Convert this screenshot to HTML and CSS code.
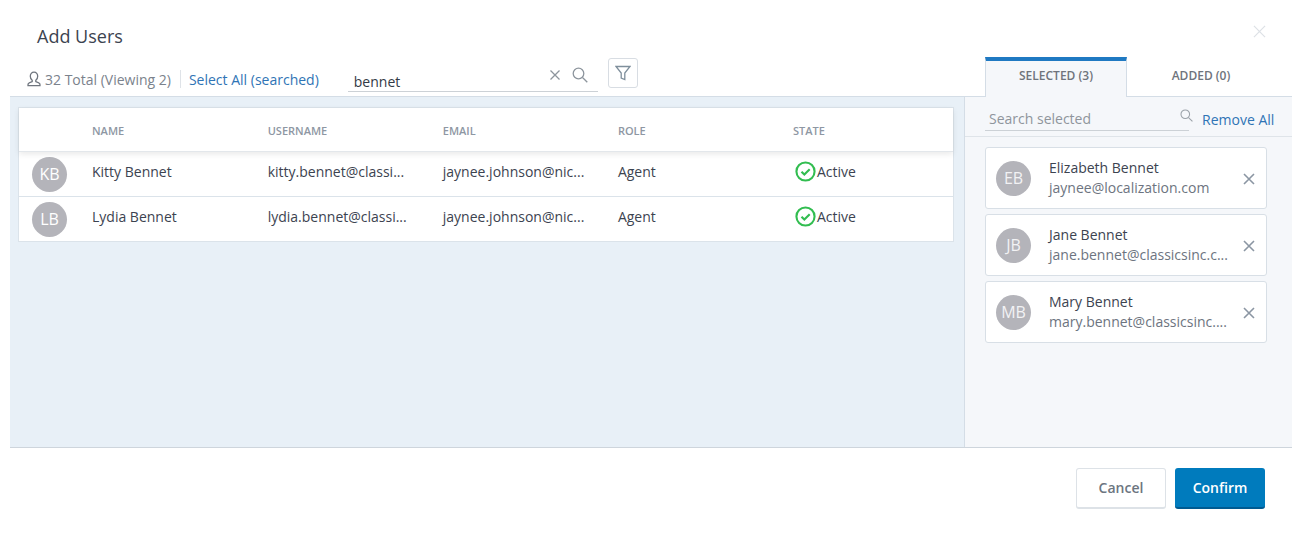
FILE: index.html
```html
<!DOCTYPE html>
<html lang="en">
<head>
<meta charset="utf-8">
<title>Add Users</title>
<link rel="stylesheet" href="styles.css">
</head>
<body>
<div class="dialog">
  <svg class="close" viewBox="0 0 14 14"><path d="M1 1l12 12M13 1L1 13"/></svg>
  <header class="head">
    <div class="head-left">
      <h1 class="title">Add Users</h1>
      <div class="toolbar">
        <svg class="user-ico" viewBox="0 0 14 16"><path d="M7 1.200c-2.300 0-3.700 1.700-3.700 4 0 1.800.8 3.300 1.900 4.100v1.300c-1.700.5-3.600 1.200-4 2.100-.2.600-.2 1.300-.2 2h12c0-.7 0-1.400-.2-2-.4-.9-2.300-1.600-4-2.100V9.300c1.100-.8 1.900-2.300 1.900-4.100 0-2.300-1.400-4-3.700-4z"/></svg>
        <span class="total">32 Total (Viewing 2)</span>
        <span class="sep"></span>
        <a class="link">Select All (searched)</a>
        <div class="search">
          <span class="search-val">bennet</span>
          <svg class="clear-ico" viewBox="0 0 12 12"><path d="M1.500 1.500l9 9M10.500 1.500l-9 9"/></svg>
          <svg class="search-ico" viewBox="0 0 16 16"><circle cx="6.500" cy="6.500" r="5.300"/><path d="M10.500 10.500l4.800 4.800"/></svg>
        </div>
        <button class="filter"><svg viewBox="0 0 16 16"><path d="M1 1.500h14L9.800 8v6.500l-3.600-1.500V8z"/></svg></button>
      </div>
    </div>
    <div class="tabs">
      <div class="tab tab-on">SELECTED (3)</div>
      <div class="tab">ADDED (0)</div>
    </div>
  </header>
  <main class="body">
    <section class="left">
      <div class="table">
        <div class="row row-head">
          <span></span><span>NAME</span><span>USERNAME</span><span>EMAIL</span><span>ROLE</span><span>STATE</span>
        </div>
        <div class="row">
          <span class="avatar">KB</span><span class="cell">Kitty Bennet</span><span class="cell">kitty.bennet@classi...</span><span class="cell">jaynee.johnson@nic...</span><span class="cell">Agent</span>
          <span class="cell state"><svg viewBox="0 0 22 22"><circle cx="11" cy="11" r="9.500"/><path d="M6.800 11.200l3 3 5.600-5.600"/></svg>Active</span>
        </div>
        <div class="row">
          <span class="avatar">LB</span><span class="cell">Lydia Bennet</span><span class="cell">lydia.bennet@classi...</span><span class="cell">jaynee.johnson@nic...</span><span class="cell">Agent</span>
          <span class="cell state"><svg viewBox="0 0 22 22"><circle cx="11" cy="11" r="9.500"/><path d="M6.800 11.200l3 3 5.600-5.600"/></svg>Active</span>
        </div>
      </div>
    </section>
    <aside class="right">
      <div class="right-top">
        <div class="sel-search">
          <span class="placeholder">Search selected</span>
          <svg viewBox="0 0 16 16"><circle cx="6.500" cy="6.500" r="5.300"/><path d="M10.500 10.500l4.800 4.800"/></svg>
        </div>
        <a class="link">Remove All</a>
      </div>
      <div class="cards">
        <div class="card">
          <span class="avatar">EB</span>
          <div class="card-text"><div class="card-name">Elizabeth Bennet</div><div class="card-mail">jaynee@localization.com</div></div>
          <svg class="card-x" viewBox="0 0 12 12"><path d="M1 1l10 10M11 1L1 11"/></svg>
        </div>
        <div class="card">
          <span class="avatar">JB</span>
          <div class="card-text"><div class="card-name">Jane Bennet</div><div class="card-mail">jane.bennet@classicsinc.c...</div></div>
          <svg class="card-x" viewBox="0 0 12 12"><path d="M1 1l10 10M11 1L1 11"/></svg>
        </div>
        <div class="card">
          <span class="avatar">MB</span>
          <div class="card-text"><div class="card-name">Mary Bennet</div><div class="card-mail">mary.bennet@classicsinc....</div></div>
          <svg class="card-x" viewBox="0 0 12 12"><path d="M1 1l10 10M11 1L1 11"/></svg>
        </div>
      </div>
    </aside>
  </main>
  <footer class="foot">
    <button class="btn btn-cancel">Cancel</button>
    <button class="btn btn-confirm">Confirm</button>
  </footer>
</div>
</body>
</html>
```
FILE: styles.css
```css
* { box-sizing: border-box; }
html, body { margin: 0; height: 100%; background: #fff; }
body { font-family: "Open Sans", "Liberation Sans", sans-serif; font-size: 14px; color: #3c4350; overflow: hidden; }
.dialog { position: relative; width: 1282px; height: 536px; margin-left: 10px; }
.close { position: absolute; left: 1243px; top: 25px; width: 13px; height: 13px; fill: none; stroke: #dde1e6; stroke-width: 1.300; }

.head { display: flex; height: 97px; border-bottom: 1px solid #d4dde6; }
.head-left { flex: 1; }
.title { margin: 0; padding: 24px 0 0 27px; height: 56px; font-size: 18px; line-height: 25px; font-weight: 400; color: #3c4350; }
.toolbar { display: flex; align-items: center; height: 40px; padding: 6px 0 0 17px; }
.user-ico { width: 14px; height: 16px; margin-top: -1px; fill: none; stroke: #6f757e; stroke-width: 1.300; }
.total { margin-left: 4px; color: #7b828c; white-space: nowrap; }
.sep { width: 1px; height: 18px; margin: 0 8px 0 9px; background: #dfe3e8; }
.link { color: #2f74b5; white-space: nowrap; }
.search { display: flex; align-items: center; width: 250px; height: 28px; margin: -2px 0 0 29px; padding: 0 10px 0 6px; border-bottom: 1px solid #ccd1d6; }
.search-val { flex: 1; margin-top: 7px; color: #333a45; }
.clear-ico { width: 12px; height: 12px; margin-top: -6px; fill: none; stroke: #8d959d; stroke-width: 1.300; }
.search-ico { width: 16px; height: 16px; margin: -6px 0 0 11px; fill: none; stroke: #8d959d; stroke-width: 1.300; }
.filter { display: flex; align-items: center; justify-content: center; width: 30px; height: 30px; margin: -13px 0 0 10px; padding: 0; background: #fff; border: 1px solid #d8dde3; border-radius: 3px; }
.filter svg { width: 16px; height: 16px; fill: none; stroke: #7f8f9c; stroke-width: 1.300; }

.tabs { display: flex; align-self: flex-end; width: 307px; margin-bottom: -1px; }
.tab { display: flex; align-items: center; justify-content: center; height: 40px; width: 148px; padding-bottom: 4px; font-size: 12px; font-weight: 600; color: #6f747c; }
.tab-on { width: 142px; background: #f5f7fa; border: 1px solid #d4dde6; border-top: 4px solid #1f79c2; border-bottom: 0; padding-bottom: 8px; }

.body { display: flex; height: 351px; border-bottom: 1px solid #ced5dc; }
.left { width: 955px; padding: 10px 10px 0 8px; background: #e8f0f7; border-right: 1px solid #d4dde6; }
.table { background: #fff; border: 1px solid #dbe3ea; }
.row { display: grid; grid-template-columns: 73px 175.700px repeat(4, 175.100px); align-items: center; height: 45px; color: #3c4350; }
.row + .row { border-top: 1px solid #dbe3ea; }
.cell { margin-bottom: 6px; }
.row-head { height: 44px; padding-top: 2px; font-size: 11px; font-weight: 600; color: #8e97a3; border-bottom: 1px solid #e3e7eb; box-shadow: 0 2px 6px rgba(0, 0, 0, .09); position: relative; }
.row-head + .row { border-top: 0; height: 44px; }
.avatar { display: flex; align-items: center; justify-content: center; flex: none; width: 35px; height: 35px; margin-left: 13px; border-radius: 50%; background: #b4b4ba; color: #fff; font-size: 16px; }
.state { display: flex; align-items: center; margin-left: 2px; }
.state svg { width: 21px; height: 21px; margin-right: 1px; fill: none; stroke: #32bd50; stroke-width: 2.200; }

.right { flex: 1; background: #f5f7fa; }
.right-top { display: flex; align-items: center; height: 40px; padding: 5px 0 0 20px; border-bottom: 1px solid #dfe4e9; }
.sel-search { display: flex; align-items: center; justify-content: space-between; width: 204px; height: 24px; border-bottom: 1px solid #ccd1d6; padding: 0 0 0 4px; }
.placeholder { color: #8f959c; }
.sel-search svg { width: 13px; height: 13px; margin: -6px -4px 0 0; fill: none; stroke: #9aa1a8; stroke-width: 1.300; }
.right-top .link { margin-left: 13px; }
.cards { display: flex; flex-direction: column; gap: 5px; padding: 10px 0 0 20px; }
.card { display: flex; align-items: center; width: 282px; height: 62px; padding-left: 10px; background: #fff; border: 1px solid #d8dfe6; border-radius: 3px; }
.card .avatar { margin-left: 0; color: #f2f2f4; }
.card-text { width: 174px; margin-left: 18px; line-height: 20px; margin-top: -1px; }
.card-name { color: #3c4350; }
.card-mail { color: #6d7480; white-space: nowrap; }
.card-x { width: 12px; height: 12px; margin: 2px 0 0 20px; fill: none; stroke: #8b96a3; stroke-width: 1.600; }

.foot { display: flex; justify-content: flex-end; gap: 9px; padding: 20px 27px 0 0; }
.btn { width: 90px; height: 41px; padding: 0; border-radius: 3px; font-family: inherit; font-size: 14px; font-weight: 600; }
.btn-cancel { padding-bottom: 1px; background: #fff; color: #6c7580; border: 1px solid #dde2e7; border-bottom-width: 2px; }
.btn-confirm { background: #007bbd; color: #fff; border: 0; border-bottom: 2px solid #005a91; }
```
